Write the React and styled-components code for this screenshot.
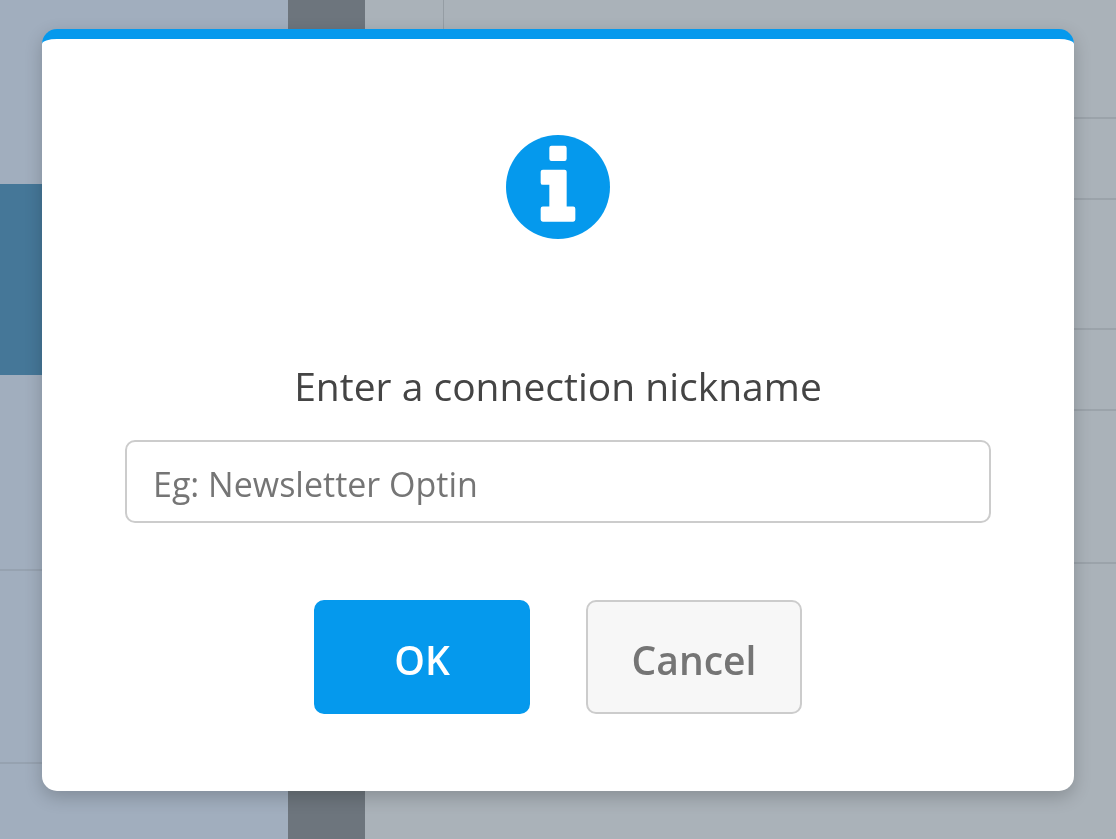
import React, { useState } from 'react';
import styled, { createGlobalStyle } from 'styled-components';

const GlobalStyle = createGlobalStyle`
  * {
    box-sizing: border-box;
  }
  body {
    margin: 0;
    font-family: 'Segoe UI', 'Open Sans', 'Noto Sans', sans-serif;
  }
`;

const Page = styled.div`
  display: grid;
  grid-template-columns: 288px 77px 1fr;
  height: 100vh;
  overflow: hidden;
  background-color: #aab2b9;
`;

const Sidebar = styled.div`
  background-color: #a1aebe;
`;

const SidebarItem = styled.div`
  height: ${(props) => props.$height}px;
  background-color: ${(props) => (props.$active ? '#457798' : 'transparent')};
  border-bottom: ${(props) => (props.$line ? '2px solid #96a2b0' : 'none')};
`;

const Gutter = styled.div`
  background-color: #6d757d;
`;

const Content = styled.div`
  display: flex;
  flex-direction: column;
  padding-left: 78px;
`;

const ContentRow = styled.div`
  height: ${(props) => props.$height}px;
  border-bottom: 2px solid #9ba3aa;
  border-left: ${(props) => (props.$first ? '1px solid #959da4' : 'none')};
`;

const Overlay = styled.div`
  position: fixed;
  inset: 0;
  padding: 29px 42px;
`;

const Modal = styled.form`
  display: flex;
  flex-direction: column;
  align-items: center;
  padding: 96px 83px 77px;
  background-color: white;
  border-top: 10px solid #0599ed;
  border-radius: 15px;
  box-shadow: 0 6px 18px rgba(0, 0, 0, 0.2);
`;

const InfoIcon = styled.svg`
  width: 104px;
  height: 104px;
  margin-bottom: 119px;
`;

const Title = styled.label`
  margin-bottom: 26px;
  font-size: 39px;
  line-height: 56px;
  color: #444;
`;

const NicknameInput = styled.input`
  width: 100%;
  height: 83px;
  padding: 4px 26px 0;
  border: 2px solid #ccc;
  border-radius: 10px;
  background-color: white;
  color: #444;
  font-family: inherit;
  font-size: 34px;

  &::placeholder {
    color: #757575;
    opacity: 1;
  }
`;

const Buttons = styled.div`
  display: flex;
  gap: 56px;
  margin-top: 77px;
`;

const Button = styled.button`
  width: 216px;
  height: 114px;
  padding: 4px 0 0;
  border: 2px solid ${(props) => (props.$primary ? '#0599ed' : '#ccc')};
  border-radius: 10px;
  background-color: ${(props) => (props.$primary ? '#0599ed' : '#f7f7f7')};
  color: ${(props) => (props.$primary ? 'white' : '#757575')};
  font-family: inherit;
  font-size: 39px;
  font-weight: 600;
  cursor: pointer;
`;

const sidebarItems = [
  { id: 1, height: 184 },
  { id: 2, height: 191, active: true },
  { id: 3, height: 196, line: true },
  { id: 4, height: 193, line: true },
];

const rowHeights = [119, 81, 130, 81, 153];

function App() {
  const [nickname, setNickname] = useState('');

  const handleSubmit = (e) => {
    e.preventDefault();
  };

  return (
    <>
      <GlobalStyle />
      <Page>
        <Sidebar>
          {sidebarItems.map((item) => (
            <SidebarItem
              key={item.id}
              $height={item.height}
              $active={item.active}
              $line={item.line}
            />
          ))}
        </Sidebar>
        <Gutter />
        <Content>
          {rowHeights.map((height, index) => (
            <ContentRow key={index} $height={height} $first={index === 0} />
          ))}
        </Content>
      </Page>
      <Overlay>
        <Modal role="dialog" aria-labelledby="title" onSubmit={handleSubmit}>
          <InfoIcon viewBox="0 0 1536 1536" aria-hidden="true">
            <circle cx="768" cy="768" r="768" fill="#0599ed" />
            <rect x="640" y="160" width="256" height="224" rx="32" fill="#fff" />
            <path
              fill="#fff"
              d="M544 512h320q32 0 32 32v512h96q32 0 32 32v160q0 32-32 32H544q-32 0-32-32v-160q0-32 32-32h96V736h-96q-32 0-32-32V544q0-32 32-32z"
            />
          </InfoIcon>
          <Title id="title" htmlFor="nickname">
            Enter a connection nickname
          </Title>
          <NicknameInput
            id="nickname"
            type="text"
            placeholder="Eg: Newsletter Optin"
            value={nickname}
            onChange={(e) => setNickname(e.target.value)}
          />
          <Buttons>
            <Button type="submit" $primary>
              OK
            </Button>
            <Button type="button" onClick={() => setNickname('')}>
              Cancel
            </Button>
          </Buttons>
        </Modal>
      </Overlay>
    </>
  );
}

export default App;
